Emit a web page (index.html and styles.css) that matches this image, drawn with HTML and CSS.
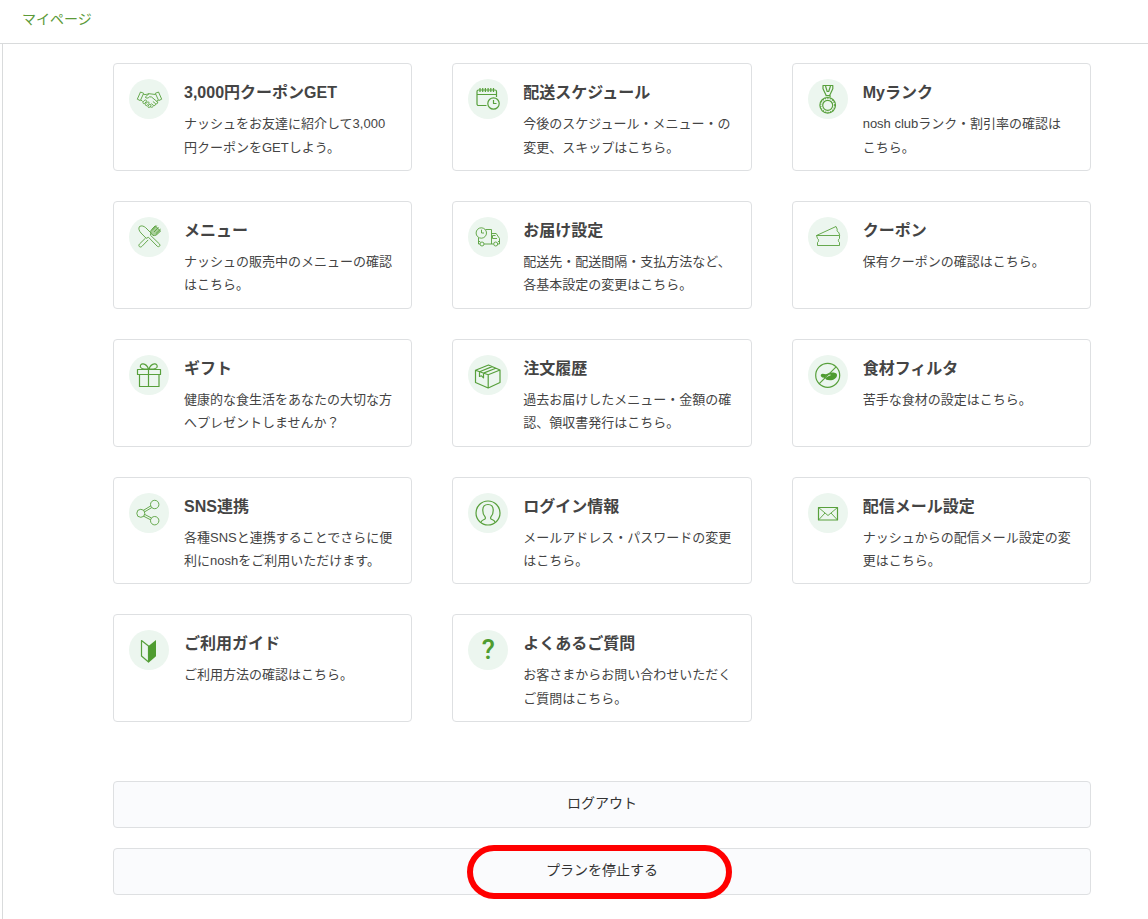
FILE: index.html
```html
<!DOCTYPE html>
<html lang="ja">
<head>
<meta charset="utf-8">
<meta name="viewport" content="width=device-width, initial-scale=1">
<title>マイページ</title>
<link rel="stylesheet" href="styles.css">
</head>
<body>
<header class="topbar"><a class="topbar-link" href="#">マイページ</a></header>
<main class="main">
  <nav class="menu" aria-label="マイページ">
    <a class="card" href="#">
      <span class="icon"><svg class="thin" viewBox="0 0 40 40"><path d="M11.5 13 8.3 20.2l3 1.4 3.4-7.3zM29.5 13l3.2 7.2-3 1.4-3.4-7.3zM14.500 15.500c2 .3 3.500-.3 5.500-.8l6.500.8M20 14.700l-3.700 3.300c.7 1.600 2.700 1.500 4.200-.2l2 .2 6.300 5.200M12 21l1.700 1.500M28.700 21.200l-1 1.700M14.200 22.800l1.500-1.600c1-.8 2.300.3 1.600 1.400l-1.600 1.800c-1.200.8-2.300-.5-1.500-1.600zM16.500 25l1.800-2c1-.7 2.200.4 1.500 1.500l-1.700 1.900c-1 .8-2.300-.4-1.600-1.400zM19 27l1.400-1.500c1-.6 2 .4 1.400 1.400l-1.200 1.400c-1 .7-2.200-.4-1.600-1.300zM28.600 23c.5 1.500-.8 2.300-2.200 1.500l-2.500-2M26.500 25c.3 1.500-1 2-2.200 1.300l-2-1.700M24.300 26.700c0 1.300-1.500 2-3.100 1.200"/></svg></span>
      <span class="text"><strong class="title">3,000円クーポンGET</strong><span class="desc">ナッシュをお友達に紹介して3,000円クーポンをGETしよう。</span></span>
    </a>
    <a class="card" href="#">
      <span class="icon"><svg viewBox="0 0 40 40"><path d="M18.500 26.500H10.500a1.500 1.500 0 0 1-1.500-1.500V12.500a1.500 1.500 0 0 1 1.500-1.500h16.500a1.500 1.500 0 0 1 1.500 1.500V18M9 15.500h19.500M12 9v4M14.700 9v4M17.400 9v4M20.100 9v4M22.800 9v4M25.500 9v4M25.500 21v3.500h3"/><circle cx="25.500" cy="24.500" r="5.700"/></svg></span>
      <span class="text"><strong class="title">配送スケジュール</strong><span class="desc">今後のスケジュール・メニュー・の変更、スキップはこちら。</span></span>
    </a>
    <a class="card" href="#">
      <span class="icon"><svg viewBox="0 0 40 40"><path d="M15 6.500h9.800v3.200l-3.300 7h-3.200l-3.300-7zM17.500 7l1.700 5.500h1.500L22.500 7M17.500 16.700h4.600v1.600"/><circle cx="19.700" cy="26.300" r="7.800"/><circle cx="19.700" cy="26.300" r="7" stroke-dasharray="1 1.500"/><circle cx="19.700" cy="26.300" r="5"/></svg></span>
      <span class="text"><strong class="title">Myランク</strong><span class="desc">nosh clubランク・割引率の確認はこちら。</span></span>
    </a>
    <a class="card" href="#">
      <span class="icon"><svg class="thin" viewBox="0 0 40 40"><path d="M10.500 9.500c-1.400 2-.3 4.500 1.500 6.500l5.200 5.300 2.300-1 8.800 9c1.600 1.200 3.400-.5 2.300-2.200l-9.200-8.900.6-2.200-5.300-5.300c-1.800-1.500-4-2.500-6.200-1.200zM16.600 21l-6.200 6.100c-1.600 1.900.7 4 2.500 2.300l6.300-6.500M22 17.200l2.300-2.200M24 19l2-2.200"/><path class="soft" d="M23 17.500c-2-1.800-1.500-3.800-.2-5.200l3.400-3.500 5.400 5.300-3.600 3.300c-1.400 1.400-3.300 1.700-5 .1z"/><path d="m23 13.500 4.800-5 M25 15l4.500-4.700M26.800 16.700l4.900-4.700"/></svg></span>
      <span class="text"><strong class="title">メニュー</strong><span class="desc">ナッシュの販売中のメニューの確認はこちら。</span></span>
    </a>
    <a class="card" href="#">
      <span class="icon"><svg class="thin" viewBox="0 0 40 40"><circle cx="13.300" cy="16" r="5.200"/><path d="M13.500 12.700V16H16M17.500 12.500h6V27M10.500 20.800V27H12M16 27h9.500M23.500 16.500h4.700l3.300 5V27H30M29 21.500h-4.500v-3h3M10.500 24.500h1.700M30 24.500h1.500"/><circle cx="14" cy="27" r="2"/><circle cx="27.700" cy="27" r="2"/></svg></span>
      <span class="text"><strong class="title">お届け設定</strong><span class="desc">配送先・配送間隔・支払方法など、各基本設定の変更はこちら。</span></span>
    </a>
    <a class="card" href="#">
      <span class="icon"><svg class="thin" viewBox="0 0 40 40"><path d="M8.500 18.500h23v3c-1.500.7-1.500 3.300 0 4v3h-22v-3c1.400-.7 1.400-3.300 0-4zM8.500 18.500l19.500-9 1.200 2.700c-.5 1.500.4 3 1.600 3.300l.9 3"/></svg></span>
      <span class="text"><strong class="title">クーポン</strong><span class="desc">保有クーポンの確認はこちら。</span></span>
    </a>
    <a class="card" href="#">
      <span class="icon"><svg viewBox="0 0 40 40"><path d="M8.500 14.500h23v5h-23zM10.500 19.500h19.500v12H10.500zM19.500 14.500v17M19.500 14c-2 .4-7 .2-8-1.800-.7-1.800.6-3.600 2.600-3.400 2.800.3 4.500 2.600 5.400 5.200zM20 14c2 .4 7 .2 8-1.800.7-1.800-.6-3.600-2.600-3.400C22.600 9.100 20.900 11.400 20 14z"/></svg></span>
      <span class="text"><strong class="title">ギフト</strong><span class="desc">健康的な食生活をあなたの大切な方へプレゼントしませんか？</span></span>
    </a>
    <a class="card" href="#">
      <span class="icon"><svg viewBox="0 0 40 40"><path d="m20.500 10 11.500 5v12.500L20.200 33 7.500 27.500V15.300zM7.500 15.300l12.700 4.400L32 15M20.200 19.700V33M11.500 16.700l12.700-5.100M15.500 18.100l12.300-4.900M11.500 16.700v4.800l2-.7 2 2v-4.700"/></svg></span>
      <span class="text"><strong class="title">注文履歴</strong><span class="desc">過去お届けしたメニュー・金額の確認、領収書発行はこちら。</span></span>
    </a>
    <a class="card" href="#">
      <span class="icon"><svg viewBox="0 0 40 40"><path class="fill" d="M13 19.600c1.200-1.500 3.200-.3 5-.4 2-.2 3-1.700 5.700-1.600 2.500 0 5.400.4 5.300 2.600 0 2.900-3.300 5-7.200 5-2.800 0-4.600-.5-4.500-2.200-2 .3-5.500-1.200-4.300-3.400z"/><path class="cut" d="M18 22c1.500-.8 2.500-2 4.500-2"/><circle cx="19.700" cy="20.300" r="12"/><path d="m11.300 28.700 16.800-16.800"/></svg></span>
      <span class="text"><strong class="title">食材フィルタ</strong><span class="desc">苦手な食材の設定はこちら。</span></span>
    </a>
    <a class="card" href="#">
      <span class="icon"><svg class="thin" viewBox="0 0 40 40"><circle cx="11.800" cy="20.300" r="4"/><circle cx="25.700" cy="11.500" r="4.200"/><circle cx="25.700" cy="27.700" r="4.200"/><path d="m14.500 17.300 7.400-4.500M15.500 18.900l7.400-4.400M15.500 21.300l7 3.700M14.600 23.200l7 3.600"/></svg></span>
      <span class="text"><strong class="title">SNS連携</strong><span class="desc">各種SNSと連携することでさらに便利にnoshをご利用いただけます。</span></span>
    </a>
    <a class="card" href="#">
      <span class="icon"><svg viewBox="0 0 40 40"><circle cx="20" cy="20" r="12"/><path d="M13 29.500c.3-2 1.500-2.500 3-3 1.700-.6 1.600-1.700 1-2.800-1.700-1.500-2.300-3.700-2.200-6.700 0-4 2-5.500 5.200-5.500s5.200 1.500 5.200 5.500c.1 3-.5 5.200-2.200 6.700-.6 1.100-.7 2.200 1 2.800 1.500.5 2.700 1 3 3"/></svg></span>
      <span class="text"><strong class="title">ログイン情報</strong><span class="desc">メールアドレス・パスワードの変更はこちら。</span></span>
    </a>
    <a class="card" href="#">
      <span class="icon"><svg viewBox="0 0 40 40"><rect x="10.500" y="14.500" width="19" height="12.500"/><path class="thin" d="m10.500 14.500 9.500 8 9.500-8M10.500 27l6.500-7M29.500 27 23 20"/></svg></span>
      <span class="text"><strong class="title">配信メール設定</strong><span class="desc">ナッシュからの配信メール設定の変更はこちら。</span></span>
    </a>
    <a class="card" href="#">
      <span class="icon"><svg viewBox="0 0 40 40"><path d="m12.500 10.500 7 5.500v16l-7-6z"/><path class="fill" d="m27 10-7.500 6v16.700L27 26.200z"/></svg></span>
      <span class="text"><strong class="title">ご利用ガイド</strong><span class="desc">ご利用方法の確認はこちら。</span></span>
    </a>
    <a class="card" href="#">
      <span class="icon question">?</span>
      <span class="text"><strong class="title">よくあるご質問</strong><span class="desc">お客さまからお問い合わせいただくご質問はこちら。</span></span>
    </a>
  </nav>
  <div class="actions">
    <button class="action" type="button">ログアウト</button>
    <button class="action" type="button">プランを停止する<span class="highlight"></span></button>
  </div>
</main>
</body>
</html>
```
FILE: styles.css
```css
* {
  box-sizing: border-box;
}

body {
  display: flex;
  flex-direction: column;
  min-height: 100vh;
  margin: 0;
  background: #fff;
  color: #444;
  font-family: "Liberation Sans", "Noto Sans CJK JP", sans-serif;
  font-size: 13px;
  line-height: 1.8;
}

.topbar {
  padding: 7px 22px 11px;
  border-bottom: 1px solid #d9dbdc;
  font-size: 14px;
}

.topbar-link {
  color: #5b9a38;
  text-decoration: none;
}

.main {
  flex: 1;
  margin-left: 2px;
  padding: 19px 57px 24px 110px;
  border-left: 1px solid #d9dbdc;
}

.menu {
  display: grid;
  grid-template-columns: repeat(3, 1fr);
  gap: 30px 40px;
}

.card {
  display: flex;
  gap: 15px;
  padding: 15px 18px 11px 15px;
  border: 1px solid #dee0e2;
  border-radius: 4px;
  color: inherit;
  text-decoration: none;
}

.icon {
  flex: none;
  width: 40px;
  height: 40px;
  border-radius: 50%;
  background: #ecf6ef;
}

.icon svg {
  display: block;
  fill: none;
  stroke: #58a03c;
  stroke-width: 1.2;
  stroke-linejoin: round;
}

.icon .thin,
.icon svg.thin {
  stroke-width: 0.9;
}

.icon .fill {
  fill: #4f9c30;
  stroke: none;
}

.icon .soft {
  fill: #a9d09b;
}

.icon .cut {
  stroke: #ecf6ef;
}

.question {
  color: #4f9c30;
  font: 500 27px/40px Roboto, sans-serif;
  text-align: center;
}

.text {
  flex: 1;
}

.title {
  display: block;
  margin-bottom: 5px;
  font-size: 16px;
  line-height: 28px;
}

.desc {
  display: block;
}

.actions {
  display: grid;
  gap: 20px;
  margin-top: 59px;
}

.action {
  position: relative;
  height: 47px;
  padding: 0 0 6px;
  border: 1px solid #dee0e2;
  border-radius: 4px;
  background: #fafbfd;
  color: #333;
  font-family: inherit;
  font-size: 14px;
}

.highlight {
  position: absolute;
  top: -4px;
  left: calc(50% - 135px);
  width: 265px;
  height: 54px;
  border: 6px solid #f00;
  border-radius: 27px;
}
```
